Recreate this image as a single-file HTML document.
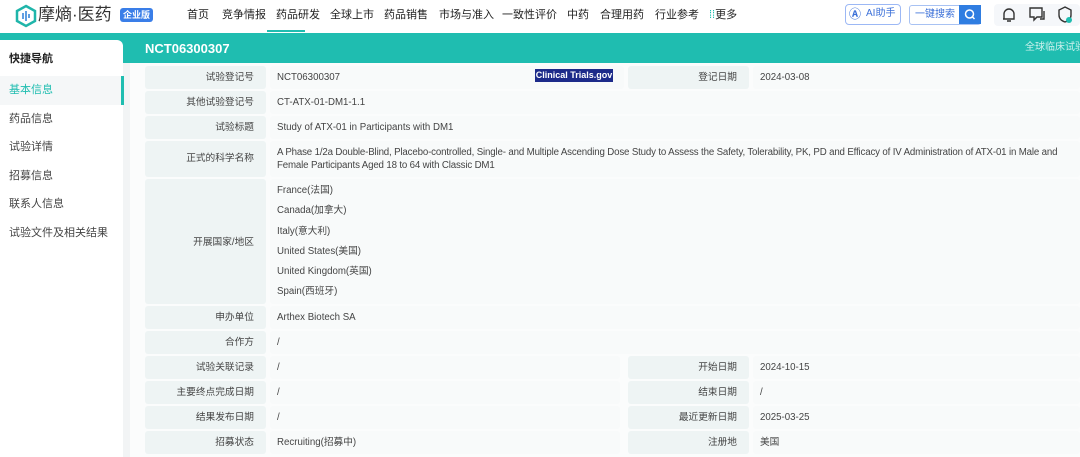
<!DOCTYPE html><html><head><meta charset="utf-8"><style>
*{margin:0;padding:0;box-sizing:border-box}
body{width:1080px;height:457px;overflow:hidden;background:#f2f4f5;font-family:"Liberation Sans","Noto Sans CJK SC",sans-serif;position:relative;color:#333}
.hdr{position:absolute;left:0;top:0;width:1080px;height:33px;background:#fff}
.nav{position:absolute;top:8px;font-size:11px;line-height:15px;color:#222}
.teal{position:absolute;left:0;top:33px;width:1080px;height:30px;background:#1fbdb0}
.side{position:absolute;left:0;top:40px;width:123px;height:417px;background:#fff;border-top-right-radius:6px}
.side div{position:absolute;left:9px;font-size:11px;line-height:14px;color:#444}
.main{position:absolute;left:130px;top:63px;width:950px;height:394px;background:#fbfcfc}
.c{position:absolute;font-size:9.7px;line-height:23px;color:#444;border-radius:3px;white-space:nowrap}
.l{background:#eef4f4;text-align:right;padding-right:12px}
.v{background:#f8fafa;padding-left:7px}
</style></head><body>
<div class="hdr"></div>
<svg style="position:absolute;left:15px;top:4px" width="22" height="24" viewBox="0 0 22 24"><path d="M11 2 L20 7 L20 17 L11 22 L2 17 L2 7 Z" fill="none" stroke="#1fb5aa" stroke-width="2.5"/><g stroke="#2a7fd8" stroke-width="1.5"><line x1="8" y1="9" x2="8" y2="15"/><line x1="11" y1="7" x2="11" y2="17"/><line x1="14" y1="10" x2="14" y2="14"/></g></svg>
<div style="position:absolute;left:38px;top:3px;font-size:17px;line-height:24px;color:#333;white-space:nowrap">摩熵·医药</div>
<div style="position:absolute;left:120px;top:8px;width:33px;height:14px;background:#3a7ee8;border-radius:3px;color:#fff;font-size:9px;font-weight:bold;text-align:center;line-height:14px">企业版</div>
<div class="nav" style="left:187px">首页</div>
<div class="nav" style="left:222px">竞争情报</div>
<div class="nav" style="left:276px">药品研发</div>
<div style="position:absolute;left:267px;top:30px;width:38px;height:2px;background:#1fbdb0"></div>
<div class="nav" style="left:330px">全球上市</div>
<div class="nav" style="left:384px">药品销售</div>
<div class="nav" style="left:439px">市场与准入</div>
<div class="nav" style="left:502px">一致性评价</div>
<div class="nav" style="left:567px">中药</div>
<div class="nav" style="left:600px">合理用药</div>
<div class="nav" style="left:655px">行业参考</div>
<div class="nav" style="left:709px"><span style="color:#1fbdb0">⁞⁞</span>更多</div>
<div style="position:absolute;left:845px;top:4px;width:56px;height:21px;border:1.5px solid #9cb8f5;border-radius:4px;font-size:10px;color:#3a6fd8;line-height:18px;padding-left:20px">AI助手<span style="position:absolute;left:3px;top:0px;font-weight:bold;font-size:12px">Ⓐ</span></div>
<div style="position:absolute;left:909px;top:5px;width:72px;height:20px;border:1.5px solid #a8c2f3;border-radius:3px;font-size:10px;color:#3a6fd8;line-height:17px;padding-left:5px;background:#fff">一键搜索<div style="position:absolute;right:-1px;top:-1px;width:22px;height:19px;background:#2f7de1"><svg width="22" height="19" viewBox="0 0 22 19"><circle cx="10.5" cy="9" r="4" fill="none" stroke="#fff" stroke-width="1.5"/><line x1="13.5" y1="12" x2="15.5" y2="14" stroke="#fff" stroke-width="1.5"/></svg></div></div>
<div style="position:absolute;left:994px;top:4px;width:86px;height:22px;background:#f5f7fa;border-radius:4px"></div>
<svg style="position:absolute;left:1001px;top:6px" width="16" height="18" viewBox="0 0 16 18"><path d="M3 13 V8 a5 5 0 0 1 10 0 V13 H2 M6 15 h4" fill="none" stroke="#333" stroke-width="1.4"/></svg>
<svg style="position:absolute;left:1028px;top:6px" width="18" height="17" viewBox="0 0 18 17"><path d="M2 2 H14 V11 H9 L6 14 V11 H2 Z M16 5 V13 H12" fill="none" stroke="#333" stroke-width="1.4"/></svg>
<svg style="position:absolute;left:1057px;top:6px" width="16" height="18" viewBox="0 0 16 18"><path d="M8 1 L14 4 V9 C14 13 11 15 8 16 C5 15 2 13 2 9 V4 Z" fill="none" stroke="#333" stroke-width="1.4"/><circle cx="12" cy="14" r="3" fill="#1fbdb0"/></svg>
<div class="teal"></div>
<div style="position:absolute;left:145px;top:41px;font-size:13px;line-height:16px;font-weight:bold;color:#fff">NCT06300307</div>
<div style="position:absolute;left:1025px;top:41px;font-size:10px;line-height:14px;color:#cdf1ed;white-space:nowrap">全球临床试验</div>
<div class="side">
<div style="top:12px;font-weight:bold;color:#222">快捷导航</div>
<div style="left:0;top:36px;width:123px;height:29px;background:#f5f7f8"></div>
<div style="left:121px;top:36px;width:3px;height:29px;background:#1fbdb0"></div>
<div style="top:43px;color:#1fbdb0">基本信息</div>
<div style="top:72px">药品信息</div>
<div style="top:100px">试验详情</div>
<div style="top:129px">招募信息</div>
<div style="top:157px">联系人信息</div>
<div style="top:186px">试验文件及相关结果</div>
</div>
<div class="main"></div>
<div class="c l" style="left:145px;top:66px;width:121px;height:23px">试验登记号</div>
<div class="c v" style="left:270px;top:66px;width:354px;height:23px">NCT06300307</div>
<div style="position:absolute;left:535px;top:69px;width:78px;height:13px;background:#1d2b8a;color:#fff;font-size:9px;font-weight:bold;text-align:center;line-height:13px">Clinical Trials.gov</div>
<div class="c l" style="left:628px;top:66px;width:121px;height:23px">登记日期</div>
<div class="c v" style="left:753px;top:66px;width:327px;height:23px">2024-03-08</div>
<div class="c l" style="left:145px;top:91px;width:121px;height:23px">其他试验登记号</div>
<div class="c v" style="left:270px;top:91px;width:810px;height:23px">CT-ATX-01-DM1-1.1</div>
<div class="c l" style="left:145px;top:116px;width:121px;height:23px">试验标题</div>
<div class="c v" style="left:270px;top:116px;width:810px;height:23px">Study of ATX-01 in Participants with DM1</div>
<div class="c l" style="left:145px;top:141px;width:121px;height:36px;line-height:36px">正式的科学名称</div>
<div class="c v" style="left:270px;top:141px;width:810px;height:36px;line-height:13px;padding-top:5px;white-space:normal;letter-spacing:-0.15px">A Phase 1/2a Double-Blind, Placebo-controlled, Single- and Multiple Ascending Dose Study to Assess the Safety, Tolerability, PK, PD and Efficacy of IV Administration of ATX-01 in Male and<br>Female Participants Aged 18 to 64 with Classic DM1</div>
<div class="c l" style="left:145px;top:179px;width:121px;height:125px;line-height:128px">开展国家/地区</div>
<div class="c v" style="left:270px;top:179px;width:810px;height:125px;line-height:20.3px;padding-top:2px">France(法国)<br>Canada(加拿大)<br>Italy(意大利)<br>United States(美国)<br>United Kingdom(英国)<br>Spain(西班牙)</div>
<div class="c l" style="left:145px;top:306px;width:121px;height:23px">申办单位</div>
<div class="c v" style="left:270px;top:306px;width:810px;height:23px">Arthex Biotech SA</div>
<div class="c l" style="left:145px;top:331px;width:121px;height:23px">合作方</div>
<div class="c v" style="left:270px;top:331px;width:810px;height:23px">/</div>
<div class="c l" style="left:145px;top:356px;width:121px;height:23px">试验关联记录</div>
<div class="c v" style="left:270px;top:356px;width:350px;height:23px">/</div>
<div class="c l" style="left:628px;top:356px;width:121px;height:23px">开始日期</div>
<div class="c v" style="left:753px;top:356px;width:327px;height:23px">2024-10-15</div>
<div class="c l" style="left:145px;top:381px;width:121px;height:23px">主要终点完成日期</div>
<div class="c v" style="left:270px;top:381px;width:350px;height:23px">/</div>
<div class="c l" style="left:628px;top:381px;width:121px;height:23px">结束日期</div>
<div class="c v" style="left:753px;top:381px;width:327px;height:23px">/</div>
<div class="c l" style="left:145px;top:406px;width:121px;height:23px">结果发布日期</div>
<div class="c v" style="left:270px;top:406px;width:350px;height:23px">/</div>
<div class="c l" style="left:628px;top:406px;width:121px;height:23px">最近更新日期</div>
<div class="c v" style="left:753px;top:406px;width:327px;height:23px">2025-03-25</div>
<div class="c l" style="left:145px;top:431px;width:121px;height:23px">招募状态</div>
<div class="c v" style="left:270px;top:431px;width:350px;height:23px">Recruiting(招募中)</div>
<div class="c l" style="left:628px;top:431px;width:121px;height:23px">注册地</div>
<div class="c v" style="left:753px;top:431px;width:327px;height:23px">美国</div>
</body></html>
